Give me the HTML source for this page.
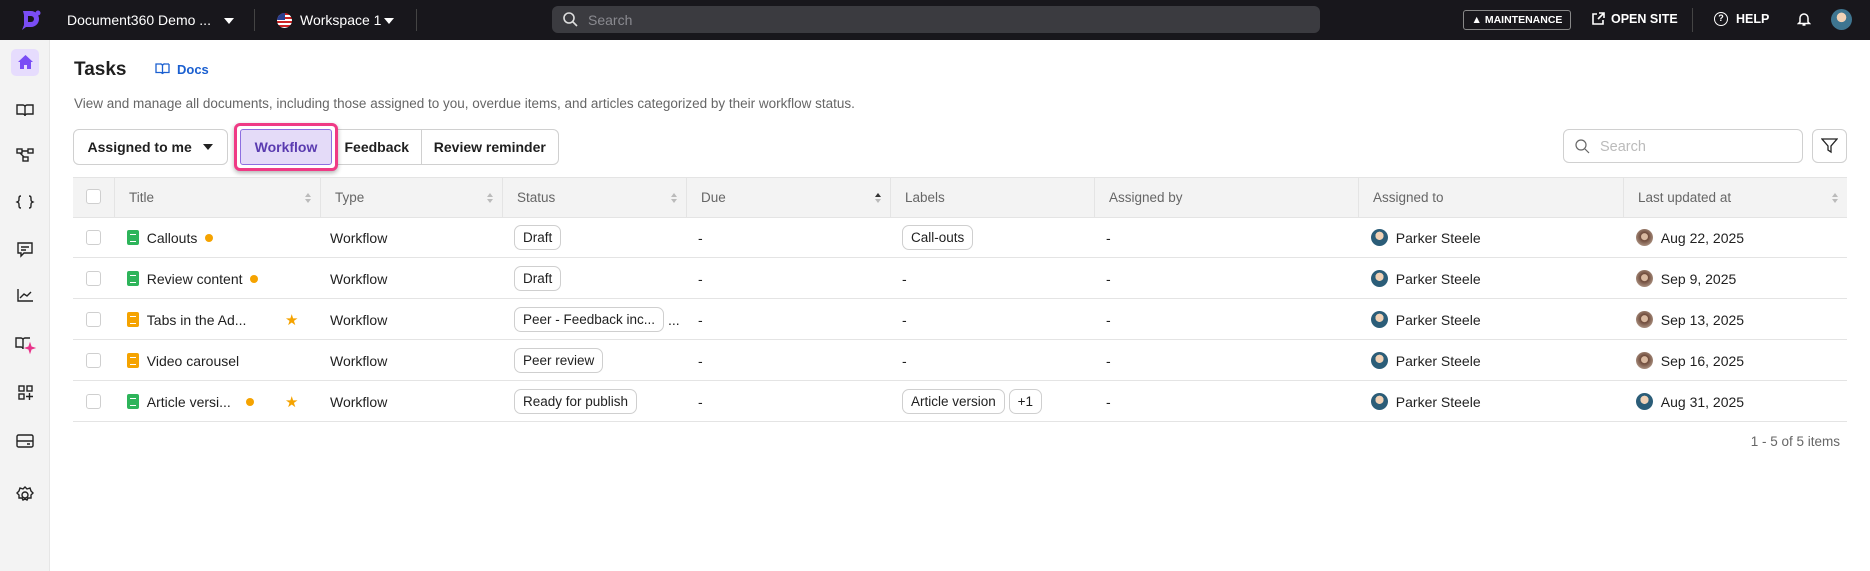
<!DOCTYPE html>
<html><head><meta charset="utf-8"><style>
*{box-sizing:border-box;margin:0;padding:0}
body{width:1870px;height:571px;overflow:hidden;background:#fff;font-family:"Liberation Sans",sans-serif;color:#1f1f1f;position:relative}
.a{position:absolute}
.top{left:0;top:0;width:1870px;height:40px;background:#18171c}
.tw{color:#fff;font-size:14px;top:12px}
.caret{width:0;height:0;border-left:5px solid transparent;border-right:5px solid transparent;border-top:6px solid #fff}
.side{left:0;top:40px;width:50px;height:531px;background:#f3f3f3;border-right:1px solid #e6e6e6}
.btn{border:1px solid #d0d0d0;background:#fff;height:36px;font-size:14px;font-weight:bold;display:flex;align-items:center;justify-content:center}
.hd{top:177px;height:41px;background:#f3f3f3;border-bottom:1px solid #e4e4e4;border-top:1px solid #e4e4e4}
.hc{top:177px;height:41px;font-size:13.5px;color:#666;display:flex;align-items:center;padding-left:14px;border-left:1px solid #e4e4e4}
.row{left:73px;width:1774px;height:41px;border-bottom:1px solid #e4e4e4}
.c{font-size:14px;display:flex;align-items:center;height:41px}
.cb{width:15px;height:15px;border:1px solid #cfcfcf;border-radius:3px;background:#fff}
.pill{border:1px solid #cfcfcf;border-radius:7px;padding:4px 8px;font-size:13.5px;background:#fff}
.dot{width:8px;height:8px;border-radius:50%;background:#f5a300;display:inline-block}
.doc{width:12px;height:15px;border-radius:2px;display:inline-block;position:relative}
.doc:after{content:"";position:absolute;left:3px;top:4px;width:6px;height:6px;border-top:1.5px solid #fff;border-bottom:1.5px solid #fff}
.av{width:17px;height:17px;border-radius:50%;background:radial-gradient(circle at 50% 40%,#f1d2b6 0 30%,#2b5d78 32%);display:inline-block}
.av2{width:17px;height:17px;border-radius:50%;background:radial-gradient(circle at 50% 45%,#d9b9a0 0 25%,#6e4a3a 30%,#a58a7a 70%);display:inline-block}
.sort{width:6px;height:10px;position:absolute;top:16px}
.sort:before{content:"";position:absolute;top:0;border-left:3.5px solid transparent;border-right:3.5px solid transparent;border-bottom:4px solid #bbb}
.sort:after{content:"";position:absolute;bottom:0;border-left:3.5px solid transparent;border-right:3.5px solid transparent;border-top:4px solid #bbb}
</style></head><body>
<div class="a top"></div>
<svg class="a" style="left:19px;top:9px" width="24" height="22" viewBox="0 0 24 22"><path d="M4 2h8a8 8 0 0 1 0 16H7l-4 3 2-5V6z" fill="#7a4df5"/><path d="M9 7h3a3 3 0 0 1 0 6H9z" fill="#18171c"/><circle cx="19" cy="4" r="2.5" fill="#7a4df5"/></svg>
<div class="a tw" style="left:67px">Document360 Demo ...</div>
<div class="a caret" style="left:224px;top:18px"></div>
<div class="a" style="left:254px;top:9px;width:1px;height:22px;background:#444"></div>
<div class="a" style="left:277px;top:13px;width:15px;height:15px;border-radius:50%;background:repeating-linear-gradient(#c22 0 2px,#fff 2px 4px);overflow:hidden"><div style="width:8px;height:7px;background:#2a3f8f"></div></div>
<div class="a tw" style="left:300px">Workspace 1</div>
<div class="a caret" style="left:384px;top:18px"></div>
<div class="a" style="left:416px;top:9px;width:1px;height:22px;background:#444"></div>
<div class="a" style="left:552px;top:6px;width:768px;height:27px;background:#3b3b40;border-radius:6px"></div>
<svg class="a" style="left:562px;top:11px" width="16" height="16" viewBox="0 0 16 16"><circle cx="7" cy="7" r="5" stroke="#ddd" stroke-width="1.6" fill="none"/><path d="M11 11l4 4" stroke="#ddd" stroke-width="1.6"/></svg>
<div class="a" style="left:588px;top:12px;color:#8a8a90;font-size:14px">Search</div>
<div class="a" style="left:1463px;top:10px;width:108px;height:20px;border:1px solid #888;border-radius:3px;color:#fff;font-size:10.5px;font-weight:bold;display:flex;align-items:center;justify-content:center">▲&nbsp;MAINTENANCE</div>
<svg class="a" style="left:1591px;top:12px" width="14" height="14" viewBox="0 0 14 14"><path d="M6 2H2v10h10V8M8 1h5v5M13 1L7 7" stroke="#fff" stroke-width="1.6" fill="none"/></svg>
<div class="a" style="left:1611px;top:12px;color:#fff;font-size:12.5px;font-weight:bold">OPEN SITE</div>
<div class="a" style="left:1692px;top:8px;width:1px;height:24px;background:#444"></div>
<div class="a" style="left:1714px;top:12px;width:14px;height:14px;border:1.6px solid #fff;border-radius:50%;color:#fff;font-size:9px;font-weight:bold;text-align:center;line-height:11px">?</div>
<div class="a" style="left:1736px;top:12px;color:#fff;font-size:12.5px;font-weight:bold">HELP</div>
<svg class="a" style="left:1797px;top:11px" width="14" height="16" viewBox="0 0 14 16"><path d="M3 11V7a4 4 0 0 1 8 0v4l1.5 1.5h-11zM5.5 14h3" stroke="#fff" stroke-width="1.5" fill="none"/></svg>
<div class="a" style="left:1831px;top:9px;width:21px;height:21px;border-radius:50%;background:radial-gradient(circle at 50% 40%,#f1d2b6 0 28%,#3e7590 30%)"></div>

<div class="a side"></div>
<div class="a" style="left:11px;top:49px;width:28px;height:27px;background:#e6dcfd;border-radius:5px"></div>
<svg class="a" style="left:17px;top:54px" width="17" height="16" viewBox="0 0 17 16"><path d="M8.5 1L1 8h2v7h4v-4h3v4h4V8h2z" fill="#7a4df5"/></svg>
<svg class="a" width="50" height="440" style="left:0;top:90px" fill="none" stroke="#222" stroke-width="1.4">
<path d="M17 15h6a2 2 0 0 1 2 2v9a2 2 0 0 0-2-2h-6zM33 15h-6a2 2 0 0 0-2 2v9a2 2 0 0 1 2-2h6z"/>
<rect x="17" y="59" width="5" height="4"/><rect x="28" y="59" width="5" height="4"/><rect x="23" y="67" width="5" height="4"/><path d="M22 61h6M20 63l4 4"/>
<path d="M21 106c-2 0-2 1-2 3s0 2-2 3c2 1 2 1 2 3s0 3 2 3M29 106c2 0 2 1 2 3s0 2 2 3c-2 1-2 1-2 3s0 3-2 3"/>
<path d="M18 153h14v10h-8l-3 3v-3h-3zM21 157h8M21 160h5"/>
<path d="M18 199v12h15M20 208l4-4 3 2 4-4"/>
<path d="M16 248h5a2 2 0 0 1 2 2v9a2 2 0 0 0-2-2h-5zM30 248h-5a2 2 0 0 0-2 2"/><path d="M30 254l1 3 3 1-3 1-1 3-1-3-3-1 3-1z" stroke="#e8338a" fill="#e8338a"/>
<rect x="19" y="296" width="5" height="5"/><rect x="27" y="296" width="5" height="5"/><rect x="19" y="304" width="5" height="5"/><path d="M29.5 303v7M26 306.5h7"/>
<rect x="17" y="345" width="16" height="12" rx="1.5"/><path d="M17 351h16M27 354h3"/>
<circle cx="25" cy="405" r="3"/><path d="M25 397l2 2 3-1 1 3 2 2-2 2 0 3-3 0-1 2-2-1-2 1-1-2-3 0 0-3-2-2 2-2 1-3 3 1z"/>
</svg>

<div class="a" style="left:74px;top:59px;font-size:19px;font-weight:bold">Tasks</div>
<svg class="a" style="left:155px;top:63px" width="15" height="12" viewBox="0 0 15 12" fill="none" stroke="#1a5fd0" stroke-width="1.3"><path d="M1 1h4a2 2 0 0 1 2.5 2v8a2 2 0 0 0-2-1.5H1zM14 1h-4a2 2 0 0 0-2.5 2"/><path d="M14 1v8.5h-4a2 2 0 0 0-2.5 1.5"/></svg>
<div class="a" style="left:177px;top:62px;font-size:13px;font-weight:bold;color:#1a5fd0">Docs</div>
<div class="a" style="left:74px;top:96px;font-size:13.5px;color:#666">View and manage all documents, including those assigned to you, overdue items, and articles categorized by their workflow status.</div>

<div class="a btn" style="left:73px;top:129px;width:155px;border-radius:6px">Assigned to me&nbsp;&nbsp;&nbsp;<span class="caret" style="border-top-color:#222"></span></div>
<div class="a btn" style="left:332px;top:129px;width:227px;border-radius:0 6px 6px 0;justify-content:flex-start"><span style="width:89px;text-align:center;border-right:1px solid #d0d0d0;line-height:34px">Feedback</span><span style="width:137px;text-align:center">Review reminder</span></div>
<div class="a" style="left:234px;top:123px;width:104px;height:48px;border:3px solid #ef3a85;border-radius:6px;box-shadow:0 2px 5px rgba(0,0,0,.3);background:#fff"></div>
<div class="a btn" style="left:240px;top:129px;width:92px;background:#e4dbf8;border-color:#8d6fe0;border-radius:3px;color:#5a3bb0">Workflow</div>

<div class="a" style="left:1563px;top:129px;width:240px;height:34px;border:1px solid #d0d0d0;border-radius:6px"></div>
<svg class="a" style="left:1574px;top:138px" width="16" height="16" viewBox="0 0 16 16"><circle cx="7" cy="7" r="5" stroke="#666" stroke-width="1.2" fill="none"/><path d="M11 11l4 4" stroke="#666" stroke-width="1.2"/></svg>
<div class="a" style="left:1600px;top:139px;font-size:14.5px;color:#bbb">Search</div>
<div class="a" style="left:1812px;top:129px;width:35px;height:34px;border:1px solid #d0d0d0;border-radius:6px"></div>
<svg class="a" style="left:1821px;top:138px" width="17" height="16" viewBox="0 0 17 16"><path d="M1 1h15l-6 7v6l-3-2V8z" stroke="#222" stroke-width="1.3" fill="none"/></svg>

<div class="a hd" style="left:73px;width:1774px"></div>
<div class="a" style="left:86px;top:189px" ><div class="cb"></div></div>
<div class="a hc" style="left:114px;width:206px">Title<span class="sort" style="left:190px"></span></div>
<div class="a hc" style="left:320px;width:182px">Type<span class="sort" style="left:166px"></span></div>
<div class="a hc" style="left:502px;width:184px">Status<span class="sort" style="left:168px"></span></div>
<div class="a hc" style="left:686px;width:204px">Due<span class="sort" style="left:188px"></span></div>
<div class="a hc" style="left:890px;width:204px">Labels</div>
<div class="a hc" style="left:1094px;width:264px">Assigned by</div>
<div class="a hc" style="left:1358px;width:265px">Assigned to</div>
<div class="a hc" style="left:1623px;width:224px">Last updated at<span class="sort" style="left:208px"></span></div>
<div class="a" style="left:875px;top:193px;border-left:3.5px solid transparent;border-right:3.5px solid transparent;border-bottom:4px solid #333"></div>

<div class="a row" style="top:217px"></div><div class="a row" style="top:258px"></div><div class="a row" style="top:299px"></div><div class="a row" style="top:340px"></div><div class="a row" style="top:381px"></div>

<div class="a" style="left:73px;top:217px;width:1774px">
<div class="a c" style="left:13px"><div class="cb"></div></div>
<div class="a c" style="left:54px"><span class="doc" style="background:#2db45a"></span>&nbsp;&nbsp;Callouts&nbsp;&nbsp;<span class="dot"></span></div>
<div class="a c" style="left:257px">Workflow</div>
<div class="a c" style="left:441px"><span class="pill">Draft</span></div>
<div class="a c" style="left:625px">-</div>
<div class="a c" style="left:829px"><span class="pill">Call-outs</span></div>
<div class="a c" style="left:1033px">-</div>
<div class="a c" style="left:1298px"><span class="av"></span>&nbsp;&nbsp;Parker Steele</div>
<div class="a c" style="left:1563px"><span class="av2"></span>&nbsp;&nbsp;Aug 22, 2025</div>
</div>
<div class="a" style="left:73px;top:258px;width:1774px">
<div class="a c" style="left:13px"><div class="cb"></div></div>
<div class="a c" style="left:54px"><span class="doc" style="background:#2db45a"></span>&nbsp;&nbsp;Review content&nbsp;&nbsp;<span class="dot"></span></div>
<div class="a c" style="left:257px">Workflow</div>
<div class="a c" style="left:441px"><span class="pill">Draft</span></div>
<div class="a c" style="left:625px">-</div>
<div class="a c" style="left:829px">-</div>
<div class="a c" style="left:1033px">-</div>
<div class="a c" style="left:1298px"><span class="av"></span>&nbsp;&nbsp;Parker Steele</div>
<div class="a c" style="left:1563px"><span class="av2"></span>&nbsp;&nbsp;Sep 9, 2025</div>
</div>
<div class="a" style="left:73px;top:299px;width:1774px">
<div class="a c" style="left:13px"><div class="cb"></div></div>
<div class="a c" style="left:54px"><span class="doc" style="background:#f5a300"></span>&nbsp;&nbsp;Tabs in the Ad...</div>
<div class="a c" style="left:212px;color:#f5a300;font-size:15px">★</div>
<div class="a c" style="left:257px">Workflow</div>
<div class="a c" style="left:441px"><span class="pill">Peer - Feedback inc...</span>&nbsp;...</div>
<div class="a c" style="left:625px">-</div>
<div class="a c" style="left:829px">-</div>
<div class="a c" style="left:1033px">-</div>
<div class="a c" style="left:1298px"><span class="av"></span>&nbsp;&nbsp;Parker Steele</div>
<div class="a c" style="left:1563px"><span class="av2"></span>&nbsp;&nbsp;Sep 13, 2025</div>
</div>
<div class="a" style="left:73px;top:340px;width:1774px">
<div class="a c" style="left:13px"><div class="cb"></div></div>
<div class="a c" style="left:54px"><span class="doc" style="background:#f5a300"></span>&nbsp;&nbsp;Video carousel</div>
<div class="a c" style="left:257px">Workflow</div>
<div class="a c" style="left:441px"><span class="pill">Peer review</span></div>
<div class="a c" style="left:625px">-</div>
<div class="a c" style="left:829px">-</div>
<div class="a c" style="left:1033px">-</div>
<div class="a c" style="left:1298px"><span class="av"></span>&nbsp;&nbsp;Parker Steele</div>
<div class="a c" style="left:1563px"><span class="av2"></span>&nbsp;&nbsp;Sep 16, 2025</div>
</div>
<div class="a" style="left:73px;top:381px;width:1774px">
<div class="a c" style="left:13px"><div class="cb"></div></div>
<div class="a c" style="left:54px"><span class="doc" style="background:#2db45a"></span>&nbsp;&nbsp;Article versi...&nbsp;&nbsp;&nbsp;&nbsp;<span class="dot"></span></div>
<div class="a c" style="left:212px;color:#f5a300;font-size:15px">★</div>
<div class="a c" style="left:257px">Workflow</div>
<div class="a c" style="left:441px"><span class="pill">Ready for publish</span></div>
<div class="a c" style="left:625px">-</div>
<div class="a c" style="left:829px"><span class="pill">Article version</span>&nbsp;<span class="pill">+1</span></div>
<div class="a c" style="left:1033px">-</div>
<div class="a c" style="left:1298px"><span class="av"></span>&nbsp;&nbsp;Parker Steele</div>
<div class="a c" style="left:1563px"><span class="av"></span>&nbsp;&nbsp;Aug 31, 2025</div>
</div>

<div class="a" style="right:30px;top:434px;font-size:13.5px;color:#666">1 - 5 of 5 items</div>
</body></html>
